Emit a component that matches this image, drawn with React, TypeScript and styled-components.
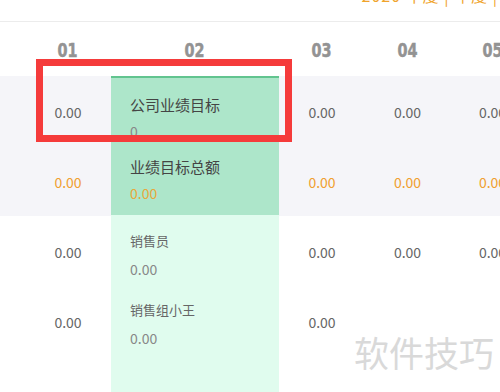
import React from "react";
import styled, { createGlobalStyle } from "styled-components";

const Global = createGlobalStyle`
  html, body { margin: 0; padding: 0; background: #fff; }
  body { width: 500px; height: 392px; overflow: hidden; font-family: "Noto Sans CJK SC", "Noto Sans", sans-serif; }
`;

const Page = styled.div`
  position: relative;
  width: 500px;
  height: 392px;
  overflow: hidden;
  background: #fff;
`;

const TopBar = styled.div`
  height: 21px;
  border-bottom: 1px solid #ececec;
  display: flex;
  justify-content: flex-end;
  overflow: hidden;
`;

const YearText = styled.div`
  margin-top: -16px;
  margin-right: 2px;
  font-size: 16px;
  line-height: 22px;
  color: #f0a42c;
  white-space: nowrap;
  letter-spacing: 1px;
`;

const Table = styled.div`
  display: flex;
  flex-direction: column;
`;

const Row = styled.div<{ $bg?: string; $h: number }>`
  display: grid;
  grid-template-columns: 25px 86px 168px 86px 85px 85px;
  height: ${(p) => p.$h}px;
  background: ${(p) => p.$bg || "#fff"};
  align-items: center;
`;

const HeadCell = styled.div`
  display: flex;
  justify-content: center;
  padding-top: 2px;
`;

const HeadLabel = styled.span`
  display: inline-block;
  font-family: "DejaVu Sans Condensed", "DejaVu Sans", sans-serif;
  font-weight: bold;
  font-size: 20px;
  color: #939393;
  -webkit-text-stroke: 0.5px #939393;
  transform: scaleX(0.8);
`;

const Cell = styled.div<{ $orange?: boolean }>`
  text-align: center;
  font-size: 14px;
  color: ${(p) => (p.$orange ? "#f0a030" : "#666")};
  padding-top: 2px;
`;

const Popup = styled.div`
  position: absolute;
  left: 111px;
  top: 76px;
  width: 168px;
  bottom: 0;
  display: flex;
  flex-direction: column;
`;

const PopTop = styled.div`
  height: 139px;
  background: #ade6ca;
  border-top: 2px solid #62c48f;
  box-sizing: border-box;
  padding: 14px 0 0 19px;
`;

const PopBottom = styled.div`
  flex: 1;
  background: #e0fcee;
  padding: 13px 0 0 19px;
`;

const Item = styled.div<{ $gap: number }>`
  margin-bottom: ${(p) => p.$gap}px;
`;

const Title = styled.div<{ $small?: boolean }>`
  font-size: ${(p) => (p.$small ? 13 : 15)}px;
  line-height: 26px;
  color: ${(p) => (p.$small ? "#666" : "#444")};
`;

const Val = styled.div<{ $orange?: boolean; $tall?: boolean }>`
  font-size: 14px;
  line-height: ${(p) => (p.$tall ? 30 : 26)}px;
  color: ${(p) => (p.$orange ? "#e8a83a" : "#888")};
`;

const RedBox = styled.div`
  position: absolute;
  left: 36px;
  top: 59px;
  width: 256px;
  height: 83px;
  box-sizing: border-box;
  border: 7px solid #f53b3b;
`;

const MarkBg = styled.div`
  position: absolute;
  left: 385px;
  top: 316px;
  right: 0;
  bottom: 0;
  background: #fff;
`;

const Mark = styled.div`
  position: absolute;
  left: 354px;
  top: 330px;
  font-size: 35px;
  line-height: 44px;
  color: #d9d9d9;
  white-space: nowrap;
`;

const cols = ["03", "04", "05"];

export default function App() {
  return (
    <Page>
      <Global />
      <TopBar>
        <YearText>2020 年度 | 年度 |</YearText>
      </TopBar>
      <Table>
        <Row $h={54}>
          <div />
          <HeadCell><HeadLabel>01</HeadLabel></HeadCell>
          <HeadCell><HeadLabel>02</HeadLabel></HeadCell>
          {cols.map((c) => (
            <HeadCell key={c}><HeadLabel>{c}</HeadLabel></HeadCell>
          ))}
        </Row>
        <Row $h={70} $bg="#f5f5f9">
          <div />
          <Cell>0.00</Cell>
          <div />
          {cols.map((c) => (
            <Cell key={c}>0.00</Cell>
          ))}
        </Row>
        <Row $h={70} $bg="#f5f5f9">
          <div />
          <Cell $orange>0.00</Cell>
          <div />
          {cols.map((c) => (
            <Cell key={c} $orange>0.00</Cell>
          ))}
        </Row>
        <Row $h={70}>
          <div />
          <Cell>0.00</Cell>
          <div />
          {cols.map((c) => (
            <Cell key={c}>0.00</Cell>
          ))}
        </Row>
        <Row $h={70}>
          <div />
          <Cell>0.00</Cell>
          <div />
          {cols.map((c) => (
            <Cell key={c}>0.00</Cell>
          ))}
        </Row>
      </Table>
      <Popup>
        <PopTop>
          <Item $gap={10}>
            <Title>公司业绩目标</Title>
            <Val>0</Val>
          </Item>
          <Item $gap={0}>
            <Title>业绩目标总额</Title>
            <Val $orange>0.00</Val>
          </Item>
        </PopTop>
        <PopBottom>
          <Item $gap={13}>
            <Title $small>销售员</Title>
            <Val $tall>0.00</Val>
          </Item>
          <Item $gap={0}>
            <Title $small>销售组小王</Title>
            <Val $tall>0.00</Val>
          </Item>
        </PopBottom>
      </Popup>
      <RedBox />
      <MarkBg />
      <Mark>软件技巧</Mark>
    </Page>
  );
}
